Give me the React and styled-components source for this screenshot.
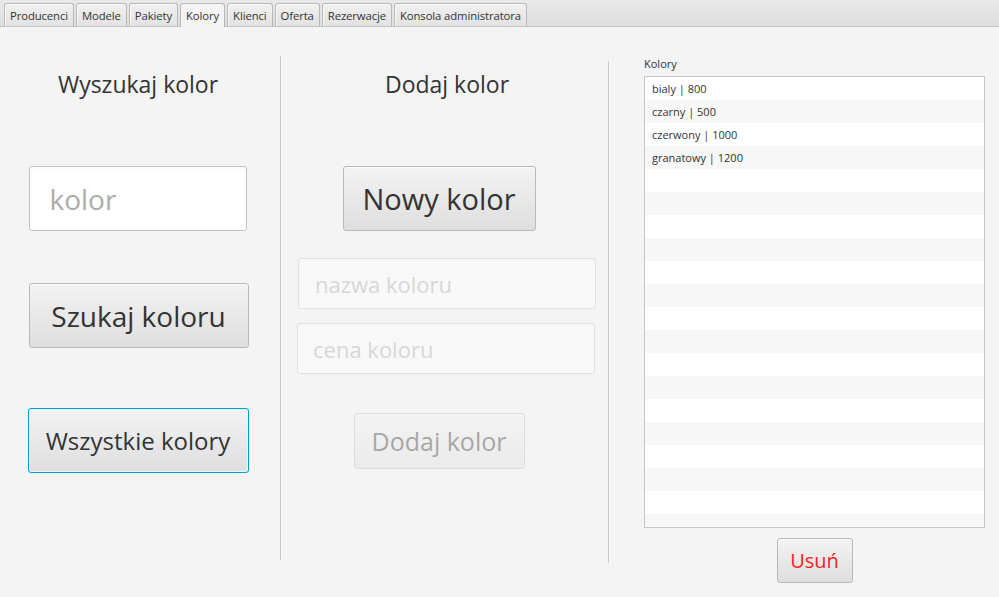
import React from "react";
import styled, { createGlobalStyle, css } from "styled-components";

const GlobalStyle = createGlobalStyle`
  html, body {
    margin: 0;
    padding: 0;
    background: #f4f4f4;
    font-family: "Open Sans", "Noto Sans", sans-serif;
    color: #333333;
  }
`;

const tabs = [
  "Producenci",
  "Modele",
  "Pakiety",
  "Kolory",
  "Klienci",
  "Oferta",
  "Rezerwacje",
  "Konsola administratora",
];

const colors = ["bialy | 800", "czarny | 500", "czerwony | 1000", "granatowy | 1200"];
const ROWS = 20;

const App = () => {
  const rows = Array.from({ length: ROWS }, (_, i) => colors[i] || "");
  return (
    <Page>
      <GlobalStyle />
      <TabBar>
        {tabs.map((t) => (
          <Tab key={t} selected={t === "Kolory"}>
            {t}
          </Tab>
        ))}
      </TabBar>
      <Content>
        <Column width={280} padRight={4}>
          <Heading>Wyszukaj kolor</Heading>
          <TextField
            placeholder="kolor"
            width={218}
            height={65}
            size={28}
            top={67}
            shift={-0.5}
            indent={20}
          />
          <Button width={220} height={65} size={28} top={52} shift={0.5}>
            Szukaj koloru
          </Button>
          <Button width={221} height={65} size={24} top={60} focused>
            Wszystkie kolory
          </Button>
        </Column>
        <Separator top={57} bottom={37} />
        <Column width={326}>
          <Heading shift={2}>Dodaj kolor</Heading>
          <Button width={193} height={65} size={29} top={67} shift={-6}>
            Nowy kolor
          </Button>
          <TextField
            placeholder="nazwa koloru"
            width={298}
            height={51}
            size={22}
            top={27}
            shift={2}
            indent={16}
            disabled
          />
          <TextField
            placeholder="cena koloru"
            width={298}
            height={51}
            size={22}
            top={14}
            shift={1}
            indent={15}
            disabled
          />
          <Button width={171} height={56} size={25} top={39} shift={-6} disabled>
            Dodaj kolor
          </Button>
        </Column>
        <Separator top={62} bottom={34} />
        <ListColumn>
          <ListLabel>Kolory</ListLabel>
          <ListView>
            {rows.map((r, i) => (
              <Row key={i} odd={i % 2 === 1}>
                {r}
              </Row>
            ))}
          </ListView>
          <DeleteRow>
            <Button width={76} height={45} size={20} danger>
              Usuń
            </Button>
          </DeleteRow>
        </ListColumn>
      </Content>
    </Page>
  );
};

export default App;

const Page = styled.div`
  width: 999px;
  height: 597px;
  display: flex;
  flex-direction: column;
  overflow: hidden;
`;

const TabBar = styled.div`
  height: 27px;
  display: flex;
  align-items: flex-end;
  gap: 2px;
  padding-left: 4px;
  background: linear-gradient(#e9e9e9, #dedede);
  border-bottom: 1px solid #c4c4c4;
  box-sizing: border-box;
`;

const Tab = styled.div`
  height: 23px;
  box-sizing: border-box;
  padding: 0 5px;
  display: flex;
  align-items: center;
  font-size: 11.3px;
  letter-spacing: -0.1px;
  color: #333;
  border: 1px solid #b8b8b8;
  border-bottom: none;
  border-radius: 3px 3px 0 0;
  background: linear-gradient(#f0f0f0, #e2e2e2);
  box-shadow: inset 1px 1px 0 #fafafa;
  ${(p) =>
    p.selected &&
    css`
      background: #f4f4f4;
      height: 24px;
      margin-bottom: -1px;
      box-shadow: none;
    `}
`;

const Content = styled.div`
  flex: 1;
  display: flex;
`;

const Column = styled.div`
  width: ${(p) => p.width}px;
  display: flex;
  flex-direction: column;
  align-items: center;
  padding-top: 42px;
  padding-right: ${(p) => p.padRight || 0}px;
  box-sizing: border-box;
`;

const Heading = styled.div`
  font-size: 23px;
  line-height: 30px;
  color: #333;
  margin-left: ${(p) => (p.shift || 0) * 2}px;
`;

const Separator = styled.div`
  width: 1px;
  margin-top: ${(p) => p.top - 28}px;
  margin-bottom: ${(p) => p.bottom}px;
  background: #c6c6c6;
  border-right: 1px solid #fbfbfb;
`;

const TextField = styled.input`
  width: ${(p) => p.width}px;
  height: ${(p) => p.height}px;
  margin-top: ${(p) => p.top}px;
  margin-left: ${(p) => (p.shift || 0) * 2}px;
  box-sizing: border-box;
  border: 1px solid #c3c3c3;
  border-radius: 3px;
  background: linear-gradient(#fafafa, #ffffff 4px);
  padding: 0 0 0 ${(p) => p.indent}px;
  font-family: inherit;
  font-size: ${(p) => p.size}px;
  color: #333;
  outline: none;
  &::placeholder {
    color: #acacac;
  }
  &:disabled {
    opacity: 0.4;
  }
`;

const Button = styled.button`
  width: ${(p) => p.width}px;
  height: ${(p) => p.height}px;
  margin-top: ${(p) => p.top || 0}px;
  margin-left: ${(p) => (p.shift || 0) * 2}px;
  box-sizing: border-box;
  border: 1px solid #b9b9b9;
  border-radius: 3px;
  background: linear-gradient(#f3f3f3, #dedede);
  box-shadow: inset 0 1px 0 #fbfbfb;
  font-family: inherit;
  font-size: ${(p) => p.size}px;
  color: ${(p) => (p.danger ? "#ff1a1a" : "#333")};
  padding: 0;
  cursor: default;
  ${(p) =>
    p.focused &&
    css`
      border: 1px solid #039ed3;
      box-shadow: inset 0 0 0 1px #e6f4fa;
    `}
  &:disabled {
    opacity: 0.4;
    color: #333;
  }
`;

const ListColumn = styled.div`
  flex: 1;
  display: flex;
  flex-direction: column;
  padding: 30px 14px 0 34px;
`;

const ListLabel = styled.div`
  font-size: 11px;
  line-height: 13px;
  margin-bottom: 6px;
  color: #333;
`;

const ListView = styled.div`
  height: 452px;
  box-sizing: border-box;
  border: 1px solid #c6c6c6;
  background: #ffffff;
  overflow: hidden;
`;

const Row = styled.div`
  height: 23px;
  line-height: 23px;
  padding-left: 7px;
  font-size: 11px;
  color: #333;
  background: ${(p) => (p.odd ? "#f7f7f7" : "#ffffff")};
`;

const DeleteRow = styled.div`
  display: flex;
  justify-content: center;
  padding-top: 10px;
`;
